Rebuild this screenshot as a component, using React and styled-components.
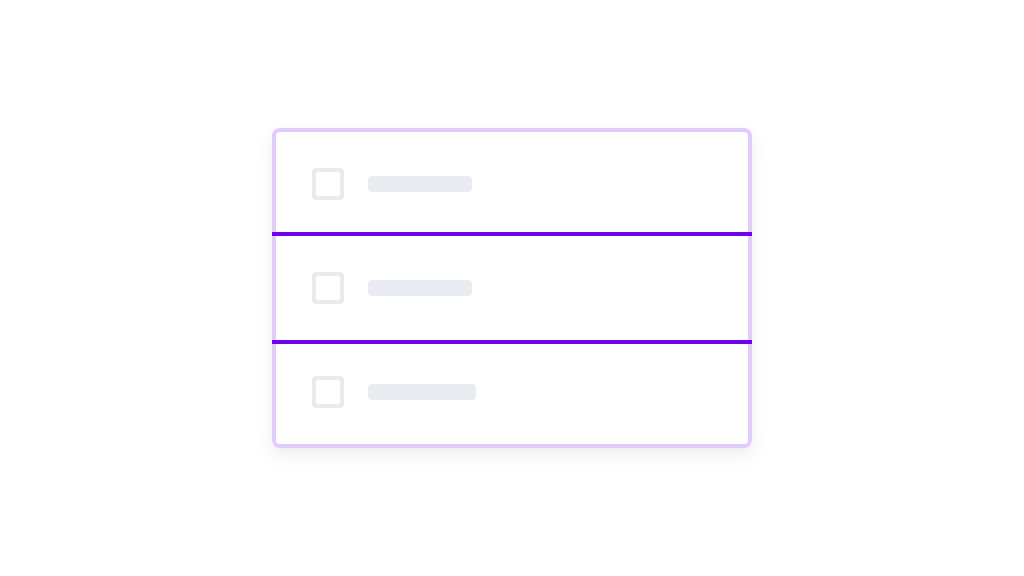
import React from "react";
import styled, { createGlobalStyle } from "styled-components";

const GlobalStyle = createGlobalStyle`
  html, body {
    margin: 0;
    padding: 0;
    background: #ffffff;
    font-family: "Inter", "Liberation Sans", sans-serif;
  }
`;

const Page = styled.div`
  width: 1024px;
  height: 576px;
  display: flex;
  justify-content: center;
  padding-top: 128px;
  box-sizing: border-box;
`;

const Card = styled.div`
  width: 480px;
  height: 320px;
  box-sizing: border-box;
  border: 4px solid #e1cdf9;
  border-radius: 8px;
  background: #ffffff;
  box-shadow: 0 8px 20px rgba(0, 0, 0, 0.06), 0 2px 6px rgba(0, 0, 0, 0.03);
  display: flex;
  flex-direction: column;
`;

const Row = styled.div`
  height: 104px;
  flex-shrink: 0;
  display: flex;
  align-items: center;
  gap: 24px;
  padding-left: 36px;
`;

// purple rule that overlaps the card's side borders
const Divider = styled.div`
  position: relative;
  height: 4px;
  flex-shrink: 0;
  margin: ${(p) => (p.$after ? "0 -4px -4px" : "-4px -4px 0")};
  background: #6a05e8;
`;

const Box = styled.div`
  width: 32px;
  height: 32px;
  box-sizing: border-box;
  border: 4px solid #e8ebf0;
  border-radius: 4px;
`;

const Bar = styled.div`
  width: ${(p) => p.$w}px;
  height: 16px;
  border-radius: 4px;
  background: #e8ebf0;
`;

const rows = [104, 104, 108];

export default function App() {
  return (
    <>
      <GlobalStyle />
      <Page>
        <Card>
          {rows.map((w, i) => (
            <React.Fragment key={i}>
              {i === 1 && <Divider />}
              {i === 2 && <Divider $after />}
              <Row>
                <Box />
                <Bar $w={w} />
              </Row>
            </React.Fragment>
          ))}
        </Card>
      </Page>
    </>
  );
}
